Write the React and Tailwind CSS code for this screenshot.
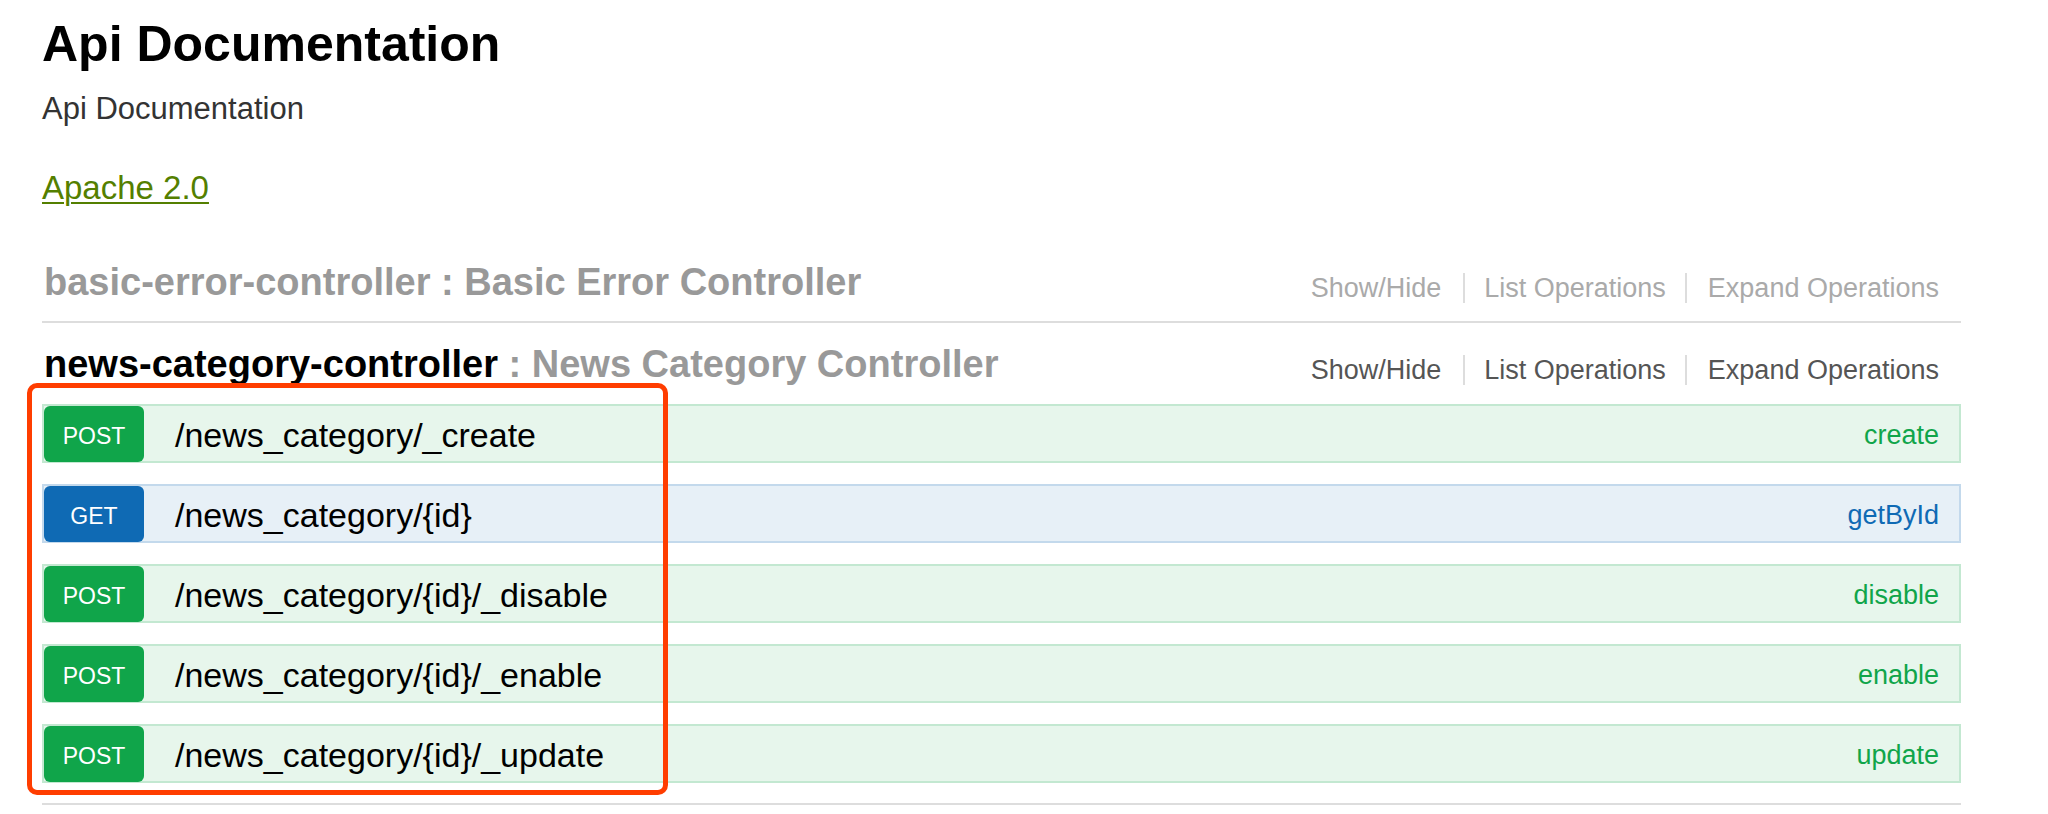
const operations = [
  { method: "POST", path: "/news_category/_create", name: "create" },
  { method: "GET", path: "/news_category/{id}", name: "getById" },
  { method: "POST", path: "/news_category/{id}/_disable", name: "disable" },
  { method: "POST", path: "/news_category/{id}/_enable", name: "enable" },
  { method: "POST", path: "/news_category/{id}/_update", name: "update" },
];

const styles = {
  POST: {
    row: "bg-[#e7f6ec] border-[#c3e8d1]",
    badge: "bg-[#10a54a]",
    name: "text-[#10a54a]",
  },
  GET: {
    row: "bg-[#e7f0f7] border-[#c3d9ec]",
    badge: "bg-[#0f6ab4]",
    name: "text-[#0f6ab4]",
  },
};

const Options = ({ dim }) => (
  <ul className={`flex pr-[22px] text-[27px] leading-[30px] ${dim ? "text-[#aaa]" : "text-[#555]"}`}>
    <li className="pr-[22px]">Show/Hide</li>
    <li className="px-[19px] border-l-2 border-[#ddd]">List Operations</li>
    <li className="pl-[21px] border-l-2 border-[#ddd]">Expand Operations</li>
  </ul>
);

const Operation = ({ op }) => {
  const s = styles[op.method];
  return (
    <li className={`flex items-center h-[59px] border-2 ${s.row}`}>
      <span className={`flex items-center justify-center w-[100px] h-[56px] -mb-[1px] pt-[4px] rounded-[6px] text-white text-[23px] ${s.badge}`}>
        {op.method}
      </span>
      <span className="ml-[31px] pt-[2px] text-[34px] leading-[40px] text-black">{op.path}</span>
      <span className={`ml-auto pr-[20px] pt-[4px] text-[27px] ${s.name}`}>{op.name}</span>
    </li>
  );
};

export default function App() {
  return (
    <div className="relative w-[2048px] h-[814px] bg-white overflow-hidden font-['Liberation_Sans',Arial,sans-serif]">
      <div className="ml-[42px] w-[1919px] pt-[14px]">
        <h1 className="text-[50px] leading-[60px] font-bold text-black">Api Documentation</h1>
        <p className="mt-[15px] text-[31px] leading-[40px] text-[#333]">Api Documentation</p>
        <a href="#" className="block w-fit mt-[39px] text-[33px] leading-[40px] text-[#547f00] underline decoration-2 underline-offset-[3px]">
          Apache 2.0
        </a>

        {/* collapsed section */}
        <div className="mt-[49px] flex items-baseline justify-between pb-[14px] border-b-2 border-[#ddd]">
          <h2 className="pl-[2px] text-[38px] leading-[50px] font-bold text-[#999]">
            basic-error-controller : Basic Error Controller
          </h2>
          <div className="translate-y-[2px]">
            <Options dim />
          </div>
        </div>

        {/* expanded section */}
        <div className="pb-[20px] border-b-2 border-[#ddd]">
          <div className="mt-[16px] flex items-baseline justify-between">
            <h2 className="pl-[2px] text-[38px] leading-[50px] font-bold text-[#999]">
              <span className="text-black">news-category-controller</span> : News Category Controller
            </h2>
            <div className="translate-y-[2px]">
              <Options />
            </div>
          </div>
          <ul className="mt-[15px] flex flex-col gap-[21px]">
            {operations.map((op) => (
              <Operation key={op.path} op={op} />
            ))}
          </ul>
        </div>
      </div>

      {/* annotation box */}
      <div className="absolute left-[27px] top-[383px] w-[641px] h-[412px] border-[5px] border-[#ff3d00] rounded-[10px] pointer-events-none" />
    </div>
  );
}
